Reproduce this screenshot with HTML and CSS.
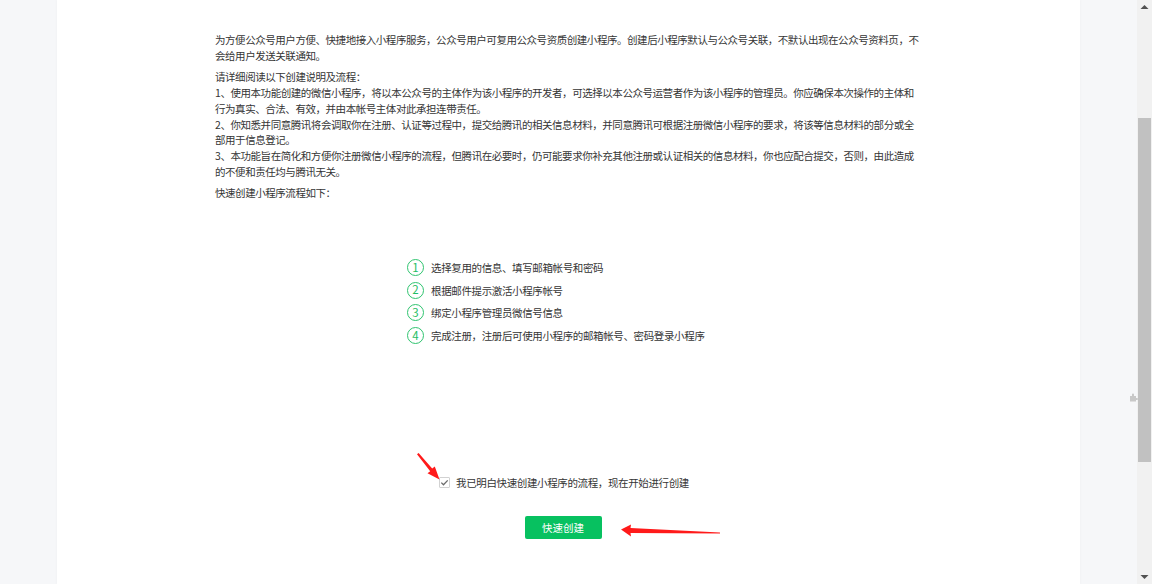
FILE: index.html
```html
<!DOCTYPE html>
<html lang="zh-CN">
<head>
<meta charset="utf-8">
<title>快速创建小程序</title>
<link rel="stylesheet" href="styles.css">
</head>
<body>
<div class="viewport">
  <div class="panel">
    <div class="content">
      <p class="para">为方便公众号用户方便、快捷地接入小程序服务，公众号用户可复用公众号资质创建小程序。创建后小程序默认与公众号关联，不默认出现在公众号资料页，不会给用户发送关联通知。</p>
      <p class="para">请详细阅读以下创建说明及流程：<br>1、使用本功能创建的微信小程序，将以本公众号的主体作为该小程序的开发者，可选择以本公众号运营者作为该小程序的管理员。你应确保本次操作的主体和行为真实、合法、有效，并由本帐号主体对此承担连带责任。<br>2、你知悉并同意腾讯将会调取你在注册、认证等过程中，提交给腾讯的相关信息材料，并同意腾讯可根据注册微信小程序的要求，将该等信息材料的部分或全部用于信息登记。<br>3、本功能旨在简化和方便你注册微信小程序的流程，但腾讯在必要时，仍可能要求你补充其他注册或认证相关的信息材料，你也应配合提交，否则，由此造成的不便和责任均与腾讯无关。</p>
      <p class="para">快速创建小程序流程如下：</p>

      <ol class="steps">
        <li class="step"><span class="num">1</span><span>选择复用的信息、填写邮箱帐号和密码</span></li>
        <li class="step"><span class="num">2</span><span>根据邮件提示激活小程序帐号</span></li>
        <li class="step"><span class="num">3</span><span>绑定小程序管理员微信号信息</span></li>
        <li class="step"><span class="num">4</span><span>完成注册，注册后可使用小程序的邮箱帐号、密码登录小程序</span></li>
      </ol>

      <label class="agree">
        <span class="checkbox">
          <svg width="9" height="9" viewBox="0 0 9 9"><path d="M1.3 4.6 L3.5 6.8 L7.7 2.4" fill="none" stroke="#6b6b6b" stroke-width="1.3"/></svg>
        </span>
        <span>我已明白快速创建小程序的流程，现在开始进行创建</span>
      </label>

      <div class="actions">
        <button class="btn">快速创建</button>
      </div>
    </div>

    <svg class="arrow arrow-check" width="24" height="27" viewBox="0 0 24 27">
      <path d="M0 1.2 L1.6 0 L15.2 15.6 L17.8 13.6 L22.5 26.5 L10.5 20.3 L13.2 18.3 Z" fill="#ff1a1a"/>
    </svg>
    <svg class="arrow arrow-btn" width="100" height="14" viewBox="0 0 100 14">
      <path d="M0 5.5 L10 0.5 L9.5 4 L99 8.5 L99 9.5 L9.5 9 L10 12.5 Z" fill="#ff1a1a"/>
    </svg>
  </div>
</div>

<div class="scrollbar">
  <svg class="sb-up" width="15" height="15" viewBox="0 0 15 15"><path d="M3.5 9 L7.5 5 L11.5 9 Z" fill="#505050"/></svg>
  <div class="sb-thumb"></div>
  <svg class="sb-down" width="15" height="15" viewBox="0 0 15 15"><path d="M3.5 6 L7.5 10 L11.5 6 Z" fill="#505050"/></svg>
</div>

<svg class="ext-icon" width="9" height="9" viewBox="0 0 9 9">
  <path d="M1 3 H3 V1.5 A1 1 0 0 1 5 1.5 V3 H7 V5 H8 A1 1 0 0 1 8 7 H7 V8.5 H1 Z" fill="#c8c8c8"/>
</svg>
</body>
</html>
```

FILE: styles.css
```css
* {
  box-sizing: border-box;
}

html, body {
  margin: 0;
  padding: 0;
  height: 584px;
  overflow: hidden;
}

body {
  background: #f6f7f9;
  font-family: "Noto Sans CJK SC", "Microsoft YaHei", sans-serif;
  font-size: 10.5px;
  letter-spacing: -0.37px;
  color: #353535;
}

.viewport {
  width: calc(100% - 15px);
  height: 584px;
}

.panel {
  position: relative;
  width: 1023px;
  height: 584px;
  margin: 0 auto;
  background: #ffffff;
  box-shadow: 0 0 3px rgba(0, 0, 0, 0.04);
}

.content {
  width: 707px;
  margin: 0 auto;
  padding-top: 32px;
}

.para {
  margin: 0 0 6px 0;
  padding-right: 2px;
  line-height: 15.7px;
  letter-spacing: -0.45px;
}

.steps {
  list-style: none;
  margin: 55px 0 0 0;
  padding: 0 0 0 192px;
}

.step {
  display: flex;
  align-items: center;
  height: 22.7px;
  line-height: 15px;
}

.num {
  display: flex;
  align-items: center;
  justify-content: center;
  width: 17px;
  height: 17px;
  margin-right: 7px;
  border: 1.3px solid #2fc46f;
  border-radius: 50%;
  color: #1fbd64;
  font-size: 11.5px;
  letter-spacing: 0;
  line-height: 1;
  flex: none;
}

.agree {
  display: flex;
  align-items: center;
  justify-content: center;
  margin-top: 128px;
  padding-right: 9px;
  line-height: 15px;
}

.checkbox {
  display: flex;
  align-items: center;
  justify-content: center;
  width: 11px;
  height: 11px;
  margin-right: 6px;
  border: 1px solid #d2d2d2;
  border-radius: 1px;
  background: #fff;
}

.actions {
  display: flex;
  justify-content: center;
  margin-top: 26px;
  padding-right: 11px;
}

.btn {
  width: 77px;
  height: 23px;
  border: none;
  border-radius: 2px;
  background: #07c160;
  color: #ffffff;
  font-family: inherit;
  font-size: 10.5px;
  letter-spacing: 0;
  padding: 0;
}

.arrow {
  position: absolute;
}

.arrow-check {
  left: 360px;
  top: 453px;
}

.arrow-btn {
  left: 564px;
  top: 524px;
}

.scrollbar {
  position: fixed;
  right: 0;
  top: 0;
  width: 15px;
  height: 584px;
  background: #f1f1f1;
}

.sb-up {
  position: absolute;
  top: 0;
  left: 0;
}

.sb-down {
  position: absolute;
  bottom: 0;
  left: 0;
}

.sb-thumb {
  position: absolute;
  left: 1px;
  top: 118px;
  width: 13px;
  height: 344px;
  background: #c1c1c1;
}

.ext-icon {
  position: fixed;
  left: 1129px;
  top: 393px;
}
```
